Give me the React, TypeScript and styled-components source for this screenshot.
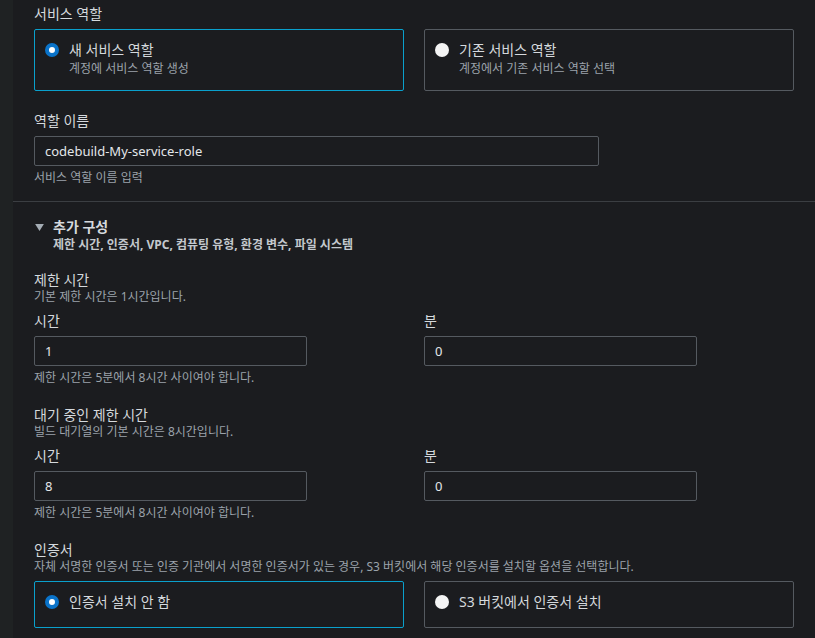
import React from "react";
import styled, { createGlobalStyle } from "styled-components";

const GlobalStyle = createGlobalStyle`
  body {
    margin: 0;
    background: #1b1c1f;
    font-family: "Noto Sans", "Noto Sans CJK KR", sans-serif;
    color: #d5d9dd;
  }
`;

type Option = { title: string; desc?: string; selected?: boolean };

const roleOptions: Option[] = [
  { title: "새 서비스 역할", desc: "계정에 서비스 역할 생성", selected: true },
  { title: "기존 서비스 역할", desc: "계정에서 기존 서비스 역할 선택" },
];

const certOptions: Option[] = [
  { title: "인증서 설치 안 함", selected: true },
  { title: "S3 버킷에서 인증서 설치" },
];

function Tiles({ options }: { options: Option[] }) {
  return (
    <TileGrid>
      {options.map((o) => (
        <Tile key={o.title} $selected={!!o.selected} $twoLine={!!o.desc}>
          <Radio $selected={!!o.selected} />
          <TileText>
            <TileTitle>{o.title}</TileTitle>
            {o.desc && <TileDesc>{o.desc}</TileDesc>}
          </TileText>
        </Tile>
      ))}
    </TileGrid>
  );
}

function TimeFields({ hours, minutes }: { hours: string; minutes: string }) {
  return (
    <>
      <TimeGrid>
        <div>
          <SubLabel>시간</SubLabel>
          <Input $width={273} defaultValue={hours} />
        </div>
        <div>
          <SubLabel>분</SubLabel>
          <Input $width={273} defaultValue={minutes} />
        </div>
      </TimeGrid>
      <Help>제한 시간은 5분에서 8시간 사이여야 합니다.</Help>
    </>
  );
}

export default function App() {
  return (
    <Page>
      <GlobalStyle />
      <Strip />
      <Main>
        <Label>서비스 역할</Label>
        <Tiles options={roleOptions} />

        <Section $gap={21}>
          <Label>역할 이름</Label>
          <Input $width={565} $top={6} defaultValue="codebuild-My-service-role" />
          <Help>서비스 역할 이름 입력</Help>
        </Section>

        <Divider />

        <Expander>
          <Caret viewBox="0 0 10 8">
            <path d="M0 0 H10 L5 8 Z" fill="#a4acb4" />
          </Caret>
          <div>
            <ExpanderTitle>추가 구성</ExpanderTitle>
            <ExpanderDesc>제한 시간, 인증서, VPC, 컴퓨팅 유형, 환경 변수, 파일 시스템</ExpanderDesc>
          </div>
        </Expander>

        <Section $gap={18}>
          <Label>제한 시간</Label>
          <Desc>기본 제한 시간은 1시간입니다.</Desc>
          <TimeFields hours="1" minutes="0" />
        </Section>

        <Section>
          <Label>대기 중인 제한 시간</Label>
          <Desc>빌드 대기열의 기본 시간은 8시간입니다.</Desc>
          <TimeFields hours="8" minutes="0" />
        </Section>

        <Section>
          <Label>인증서</Label>
          <Desc>
            자체 서명한 인증서 또는 인증 기관에서 서명한 인증서가 있는 경우, S3 버킷에서 해당 인증서를 설치할 옵션을 선택합니다.
          </Desc>
          <Tiles options={certOptions} />
        </Section>
      </Main>
    </Page>
  );
}

const Page = styled.div`
  display: flex;
  min-height: 638px;
`;

const Strip = styled.div`
  flex: 0 0 13px;
  background: #1f2223;
`;

const Main = styled.div`
  flex: 1;
  padding: 5px 21px 0 21px;
  display: flex;
  flex-direction: column;
`;

const Label = styled.div`
  font-size: 14px;
  line-height: 18px;
  color: #d5d9dd;
`;

const Desc = styled.div`
  font-size: 12px;
  line-height: 16px;
  color: #9ba3ab;
`;

const Help = styled(Desc)`
  margin-top: 4px;
`;

const Section = styled.div<{ $gap?: number }>`
  margin-top: ${(p) => p.$gap ?? 20}px;
  display: flex;
  flex-direction: column;
`;

const TileGrid = styled.div`
  display: grid;
  grid-template-columns: 370px 370px;
  gap: 20px;
  margin-top: 6px;
`;

const Tile = styled.div<{ $selected: boolean; $twoLine: boolean }>`
  display: flex;
  align-items: flex-start;
  gap: 10px;
  padding: 9px 10px ${(p) => (p.$twoLine ? 13 : 14)}px;
  border: 1px solid ${(p) => (p.$selected ? "#0aa0cc" : "#555a60")};
  border-radius: 2px;
`;

const Radio = styled.span<{ $selected: boolean }>`
  flex: 0 0 14px;
  height: 14px;
  margin-top: 4px;
  border-radius: 50%;
  box-sizing: border-box;
  background: ${(p) => (p.$selected ? "#ffffff" : "#f4f4f4")};
  border: ${(p) => (p.$selected ? "4px solid #0a73c9" : "none")};
`;

const TileText = styled.div`
  display: flex;
  flex-direction: column;
`;

const TileTitle = styled.div`
  font-size: 14px;
  line-height: 22px;
  color: #d5d9dd;
`;

const TileDesc = styled.div`
  font-size: 12px;
  line-height: 16px;
  color: #9ba3ab;
`;

const Input = styled.input<{ $width: number; $top?: number }>`
  width: ${(p) => p.$width}px;
  height: 30px;
  box-sizing: border-box;
  margin-top: ${(p) => p.$top ?? 5}px;
  padding: 0 10px;
  background: #1b1c1f;
  border: 1px solid #555a60;
  border-radius: 2px;
  color: #e3e6e9;
  font-family: "Noto Sans", "Noto Sans CJK KR", sans-serif;
  font-size: 13px;
  outline: none;
`;

const Divider = styled.div`
  height: 1px;
  background: #3b3e42;
  margin: 15px -21px 0;
`;

const Expander = styled.div`
  display: flex;
  gap: 9px;
  margin-top: 15px;
  padding-left: 1px;
`;

const Caret = styled.svg`
  width: 9px;
  height: 7px;
  margin-top: 7px;
`;

const ExpanderTitle = styled.div`
  font-size: 14px;
  font-weight: 700;
  line-height: 20px;
  color: #d5d9dd;
`;

const ExpanderDesc = styled.div`
  font-size: 12px;
  font-weight: 700;
  line-height: 16px;
  color: #c3c8cd;
`;

const TimeGrid = styled.div`
  display: grid;
  grid-template-columns: 370px 370px;
  gap: 20px;
  margin-top: 6px;
`;

const SubLabel = styled.div`
  font-size: 14px;
  line-height: 20px;
  color: #d5d9dd;
`;
